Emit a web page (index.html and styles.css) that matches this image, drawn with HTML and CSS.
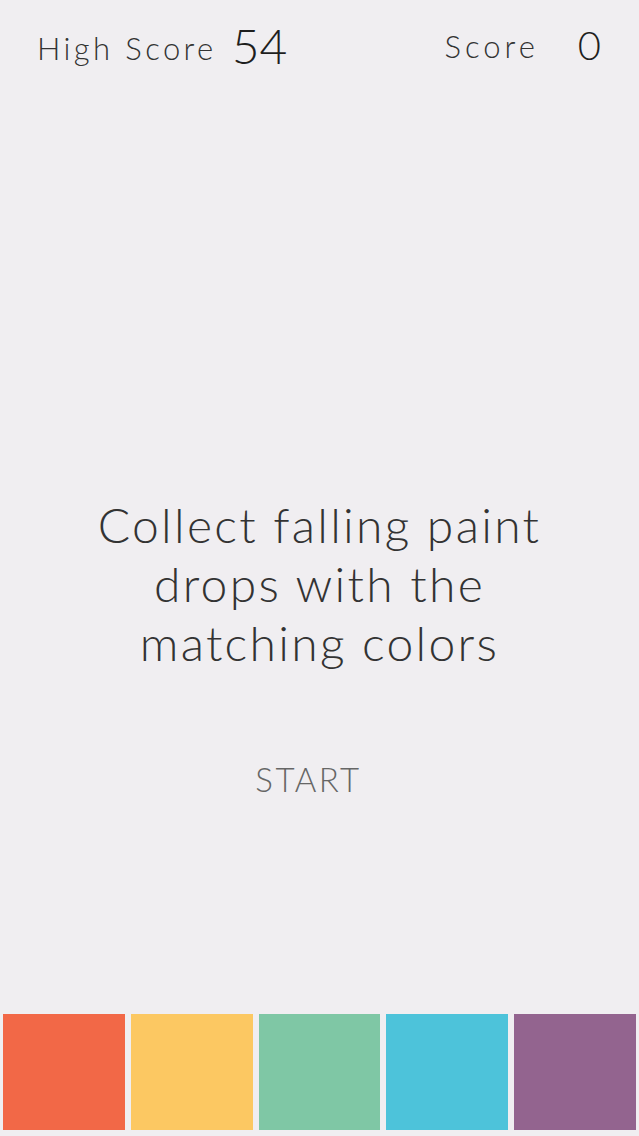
FILE: index.html
```html
<!DOCTYPE html>
<html lang="en">
<head>
    <meta charset="UTF-8">
    <meta name="viewport" content="width=device-width, initial-scale=1.0">
    <title>Paint Drops</title>
    <link rel="stylesheet" href="styles.css">
</head>
<body>
    <div class="screen">
        <div class="scores">
            <div class="score-group">
                <span class="score-label">High Score</span>
                <span class="score-value best">54</span>
            </div>
            <div class="score-group now">
                <span class="score-label">Score</span>
                <span class="score-value current">0</span>
            </div>
        </div>

        <div class="intro">
            <p class="intro-text">Collect falling paint drops with the matching colors</p>
            <button class="start">START</button>
        </div>

        <div class="buckets">
            <div class="bucket orange"></div>
            <div class="bucket yellow"></div>
            <div class="bucket green"></div>
            <div class="bucket blue"></div>
            <div class="bucket purple"></div>
        </div>
    </div>
</body>
</html>
```

FILE: styles.css
```css
body {
    font-family: Lato, "Open Sans", sans-serif;
    font-weight: 300;
    background-color: #f0eef1;
    color: #333;
    margin: 0;
}
.screen {
    height: 1136px;
    display: flex;
    flex-direction: column;
}
.scores {
    display: flex;
    justify-content: space-between;
    align-items: flex-start;
    padding: 22px 38px 0 37px;
}
.score-group {
    display: flex;
    align-items: flex-end;
}
.score-group.now {
    margin-top: 4px;
}
.score-label {
    font-size: 31px;
    line-height: 31px;
    letter-spacing: 3.4px;
    margin-bottom: 6px;
}
.score-group.now .score-label {
    margin-bottom: 2px;
    letter-spacing: 4px;
}
.score-value {
    color: #1e1e1e;
}
.score-value.best {
    font-size: 48px;
    line-height: 48px;
    margin-left: 15px;
}
.score-value.current {
    font-size: 40px;
    line-height: 38px;
    margin-left: 39px;
}
.intro {
    flex: 1;
    display: flex;
    flex-direction: column;
    align-items: center;
    padding-top: 425px;
}
.intro-text {
    width: 520px;
    margin: 0;
    text-align: center;
    font-size: 48px;
    line-height: 59px;
    letter-spacing: 2.3px;
}
.start {
    margin: 91px 22px 0 0;
    background: none;
    border: none;
    font-family: inherit;
    font-weight: 300;
    font-size: 33px;
    line-height: 33px;
    letter-spacing: 2.4px;
    color: #666;
    cursor: pointer;
    padding: 0;
}
.buckets {
    display: flex;
    gap: 6px;
    padding: 0 3px 6px;
}
.bucket {
    flex: 1;
    height: 116px;
}
.orange { background: #f26847; }
.yellow { background: #fcc862; }
.green { background: #7fc7a5; }
.blue { background: #4dc3da; }
.purple { background: #93648f; }
```
